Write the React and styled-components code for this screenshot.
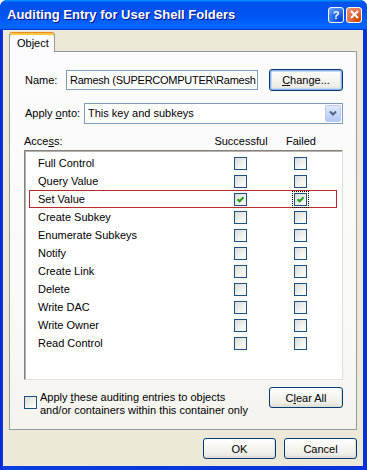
import React from 'react';
import styled, { createGlobalStyle } from 'styled-components';

const permissions = [
  'Full Control',
  'Query Value',
  'Set Value',
  'Create Subkey',
  'Enumerate Subkeys',
  'Notify',
  'Create Link',
  'Delete',
  'Write DAC',
  'Write Owner',
  'Read Control',
];

const checked = { 'Set Value': [true, true] };

function Check({ on, focus }) {
  return (
    <Box $focus={focus}>
      {on && (
        <svg width="9" height="9" viewBox="0 0 9 9">
          <path d="M1.5 4.2 L3.6 6.3 L7.6 2.2" stroke="#21a121" strokeWidth="2" fill="none" />
        </svg>
      )}
    </Box>
  );
}

function App() {
  return (
    <>
      <GlobalStyle />
      <Window>
        <TitleBar>
          <Title>Auditing Entry for User Shell Folders</Title>
          <Controls>
            <CtlButton $kind="help">?</CtlButton>
            <CtlButton $kind="close">
              <svg width="9" height="9" viewBox="0 0 9 9">
                <path d="M1 1 L8 8 M8 1 L1 8" stroke="#fff" strokeWidth="2" />
              </svg>
            </CtlButton>
          </Controls>
        </TitleBar>
        <Body>
          <TabStrip>
            <Tab>Object</Tab>
          </TabStrip>
          <Panel>
            <FieldRow>
              <Label $w={42}>Name:</Label>
              <TextBox>Ramesh (SUPERCOMPUTER\Ramesh</TextBox>
              <Button $w={74} $h={22} $default>
                <U>C</U>hange...
              </Button>
            </FieldRow>
            <FieldRow $gap={11}>
              <Label $w={60}>
                Apply <U>o</U>nto:
              </Label>
              <Select>
                This key and subkeys
                <DropButton>
                  <svg width="8" height="6" viewBox="0 0 8 6">
                    <path d="M1 1.5 L4 4.5 L7 1.5" stroke="#4d6185" strokeWidth="2" fill="none" />
                  </svg>
                </DropButton>
              </Select>
            </FieldRow>
            <Header>
              <span>
                Acce<U>s</U>s:
              </span>
              <ColTitle>Successful</ColTitle>
              <ColTitle>Failed</ColTitle>
            </Header>
            <List>
              {permissions.map((name) => {
                const [ok, fail] = checked[name] || [false, false];
                return (
                  <Row key={name} $selected={!!checked[name]}>
                    <span>{name}</span>
                    <Check on={ok} />
                    <span />
                    <Check on={fail} focus={!!checked[name]} />
                  </Row>
                );
              })}
            </List>
            <BottomRow>
              <CheckSlot>
                <Check />
              </CheckSlot>
              <Note>
                Apply <U>t</U>hese auditing entries to objects
                <br />
                and/or containers within this container only
              </Note>
              <Button $w={74}>
                C<U>l</U>ear All
              </Button>
            </BottomRow>
          </Panel>
          <Footer>
            <Button>OK</Button>
            <Button>Cancel</Button>
          </Footer>
        </Body>
      </Window>
    </>
  );
}

export default App;

const GlobalStyle = createGlobalStyle`
  html, body {
    margin: 0;
    padding: 0;
    background: #ffffff;
  }
  body {
    font-family: "Liberation Sans", Arial, sans-serif;
    font-size: 11px;
    color: #000;
  }
`;

const Window = styled.div`
  width: 367px;
  height: 470px;
  box-sizing: border-box;
  display: flex;
  flex-direction: column;
  background: linear-gradient(90deg, #0019cf 0px, #0831d9 1px, #0a3ee0 3px, #0831d9 100%);
  border-radius: 7px 7px 0 0;
  overflow: hidden;
`;

const TitleBar = styled.div`
  height: 30px;
  flex-shrink: 0;
  display: flex;
  align-items: center;
  padding: 0 5px 0 7px;
  background: linear-gradient(180deg, #0997ff, #0053ee 8%, #0050ee 40%, #06f 88%, #06f 93%, #005bff 95%, #003dd7 96%, #003dd7);
`;

const Title = styled.span`
  flex: 1;
  color: #fff;
  font-weight: bold;
  font-size: 13px;
  text-shadow: 1px 1px #0f1089;
  margin-top: -1px;
`;

const Controls = styled.div`
  display: flex;
  gap: 2px;
  margin-top: -1px;
`;

const CtlButton = styled.span`
  box-sizing: border-box;
  width: 16px;
  height: 16px;
  display: flex;
  align-items: center;
  justify-content: center;
  border: 1px solid #fff;
  border-radius: 3px;
  color: #fff;
  font-weight: bold;
  font-size: 11px;
  background: ${(p) =>
    p.$kind === 'close'
      ? 'radial-gradient(circle at 80% 85%, #cc4600 0%, #e36b45 50%, #f29a7f 100%)'
      : 'radial-gradient(circle at 80% 85%, #0043d8 0%, #2e72f0 55%, #85aff8 100%)'};
`;

const Body = styled.div`
  flex: 1;
  display: flex;
  flex-direction: column;
  margin: 0 4px 4px 3px;
  padding: 2px 6px 0 6px;
  background: #ece9d8;
`;

const TabStrip = styled.div`
  display: flex;
  position: relative;
  z-index: 1;
  margin-bottom: -1px;
`;

const Tab = styled.div`
  box-sizing: border-box;
  width: 46px;
  height: 20px;
  padding: 3px 0 0 7px;
  background: #fcfcfe;
  border: 1px solid #919b9c;
  border-top: 1px solid #e68b2c;
  border-bottom: none;
  border-radius: 3px 3px 0 0;
  box-shadow: inset 0 2px 0 #ffc73c;
  line-height: 15px;
`;

const Panel = styled.div`
  box-sizing: border-box;
  height: 379px;
  display: flex;
  flex-direction: column;
  padding: 17px 13px 0 14px;
  border: 1px solid #919b9c;
  background: linear-gradient(180deg, #fcfcfe 0%, #f8f8f4 80%, #f4f3ee 100%);
`;

const FieldRow = styled.div`
  display: flex;
  align-items: center;
  height: 22px;
  margin-top: ${(p) => p.$gap || 0}px;
`;

const Label = styled.span`
  width: ${(p) => p.$w}px;
  flex-shrink: 0;
  padding-left: 1px;
  box-sizing: border-box;
`;

const TextBox = styled.div`
  box-sizing: border-box;
  width: 192px;
  height: 20px;
  margin-right: 11px;
  padding: 0 0 0 3px;
  border: 1px solid #7f9db9;
  background: #fff;
  line-height: 18px;
  letter-spacing: -0.25px;
  white-space: nowrap;
  overflow: hidden;
`;

const Select = styled.div`
  flex: 1;
  box-sizing: border-box;
  height: 21px;
  display: flex;
  align-items: center;
  padding-left: 3px;
  border: 1px solid #7f9db9;
  background: #fff;
`;

const DropButton = styled.span`
  box-sizing: border-box;
  margin-left: auto;
  margin-right: 1px;
  width: 16px;
  height: 17px;
  display: flex;
  align-items: center;
  justify-content: center;
  border: 1px solid #bacbf4;
  border-radius: 2px;
  background: linear-gradient(180deg, #e1eafe 0%, #c4d5fb 60%, #b4c8f6 100%);
`;

const Header = styled.div`
  display: grid;
  grid-template-columns: 1fr 60px 60px;
  padding-right: 12px;
  margin-top: 9px;
  height: 16px;
  line-height: 16px;
`;

const ColTitle = styled.span`
  text-align: center;
`;

const List = styled.div`
  box-sizing: border-box;
  height: 230px;
  margin-top: 1px;
  padding-top: 3px;
  background: #fff;
  border: 1px solid;
  border-color: #828282 #e2e0d6 #e2e0d6 #828282;
  box-shadow: inset 1px 1px 0 #b5b3a9;
`;

const Row = styled.div`
  box-sizing: border-box;
  height: 18px;
  margin: 0 5px 0 4px;
  padding-left: 8px;
  display: grid;
  grid-template-columns: 196px 13px 47px 13px;
  align-items: center;
  border: 1px solid ${(p) => (p.$selected ? '#b8282f' : 'transparent')};
`;

const Box = styled.span`
  box-sizing: border-box;
  width: 13px;
  height: 13px;
  display: inline-flex;
  align-items: center;
  justify-content: center;
  border: 1px solid #1c5180;
  background: linear-gradient(135deg, #dcdcd7 0%, #f2f2ee 60%, #fff 100%);
  outline: ${(p) => (p.$focus ? '1px dotted #000' : 'none')};
  outline-offset: 1px;
`;

const BottomRow = styled.div`
  display: flex;
  align-items: flex-start;
  margin-top: 7px;
`;

const CheckSlot = styled.span`
  display: flex;
  margin-top: 9px;
`;

const Note = styled.span`
  flex: 1;
  margin: 4px 0 0 3px;
  line-height: 13px;
`;

const Button = styled.button`
  box-sizing: border-box;
  width: ${(p) => p.$w || 73}px;
  height: ${(p) => p.$h || 21}px;
  flex-shrink: 0;
  padding: 0;
  border: 1px solid #003c74;
  border-radius: 3px;
  background: linear-gradient(180deg, #fff 0%, #f6f5f0 45%, #ecebe6 85%, #d6d0c5 100%);
  font: inherit;
  color: #000;
  box-shadow: ${(p) =>
    p.$default ? 'inset 0 0 0 1px #8eb0ec, inset 0 0 0 2px #c5d9f8' : 'inset -1px -1px 0 #e3dfd6'};
`;

const Footer = styled.div`
  display: flex;
  justify-content: flex-end;
  gap: 8px;
  margin-top: 8px;
`;

const U = styled.span`
  text-decoration: underline;
`;
